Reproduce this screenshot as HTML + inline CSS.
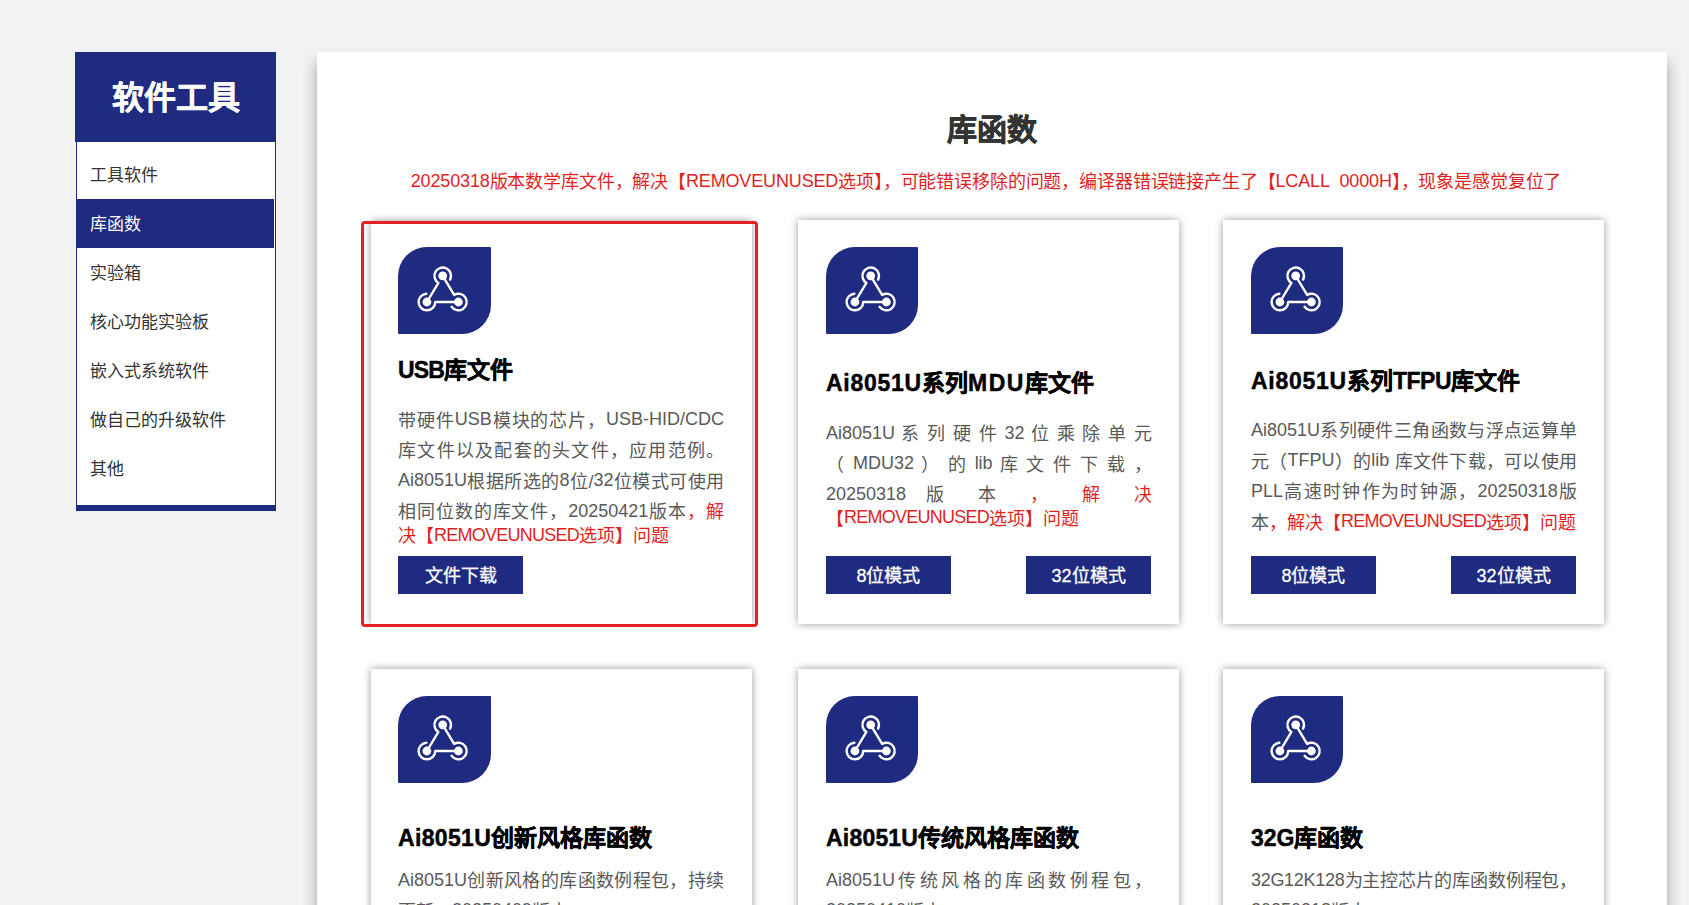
<!DOCTYPE html>
<html lang="zh-CN">
<head>
<meta charset="utf-8">
<style>
html,body{margin:0;padding:0;}
body{width:1689px;height:905px;overflow:hidden;background:#f2f2f2;position:relative;font-family:"Liberation Sans",sans-serif;}
.abs{position:absolute;}
.side-head{left:75px;top:52px;width:201px;height:90px;background:#1f2b80;color:#fff;font-size:32px;font-weight:bold;text-align:center;line-height:92px;-webkit-text-stroke:0.4px #fff;}
.menu{left:76px;top:142px;width:198px;height:363px;background:#fff;border-left:1px solid #1f2b80;border-right:1px solid #1f2b80;border-bottom:6px solid #1f2b80;}
.mi{position:absolute;left:0;width:197px;height:49px;line-height:51px;padding-left:13px;box-sizing:border-box;font-size:17px;color:#333;white-space:nowrap;}
.mi.on{background:#1f2b80;color:#fff;}
.panel{left:317px;top:52px;width:1350px;height:900px;background:#fff;box-shadow:0 10px 13px rgba(0,0,0,0.34);}
.ptitle{left:317px;width:1350px;top:109.5px;height:40px;line-height:40px;text-align:center;font-size:30px;font-weight:bold;color:#333;-webkit-text-stroke:0.6px #333;}
.sub{left:319px;width:1334px;top:169px;letter-spacing:-0.15px;height:26px;line-height:26px;text-align:center;font-size:18px;color:#e01f1f;white-space:nowrap;}
.card{position:absolute;width:381px;height:404px;background:#fff;box-shadow:0 0 8px rgba(0,0,0,0.4);}
.icon{position:absolute;left:27px;top:27px;width:93px;height:87px;background:#1f2b80;border-radius:29px 1px 29px 1px;}
.icon svg{position:absolute;left:0;top:0;}
.ctitle{position:absolute;left:27px;font-size:23px;font-weight:bold;color:#000;white-space:nowrap;line-height:30px;-webkit-text-stroke:0.45px #000;}
.desc{position:absolute;left:27px;width:326px;font-size:18px;color:#595959;}
.desc .l{display:block;height:30.5px;line-height:30.5px;white-space:nowrap;}
.desc .r{color:#e01f1f;}
.ru{letter-spacing:-0.75px;}
.lt{font-style:normal;position:relative;top:-1.5px;}
.desc .j{text-align:justify;text-align-last:justify;}
.btn{position:absolute;top:336px;width:125px;height:38px;line-height:41px;background:#1f2b80;color:#fff;font-size:18px;text-align:center;-webkit-text-stroke:0.3px #fff;}
.hl{left:360.5px;top:220.5px;width:391px;height:400px;border:3px solid #e02222;border-radius:4px;}
</style>
</head>
<body>
<svg width="0" height="0" style="position:absolute"><defs><symbol id="ic" viewBox="0 0 93 87"><g fill="none" stroke="#fff" stroke-width="2.4" stroke-linecap="round"><path d="M40.41 35.91 A8.3 8.3 0 1 1 52.09 32.58 M40.41 35.91 L28.90 55.00 M37.20 55.00 A8.3 8.3 0 1 1 28.32 46.72 M37.20 55.00 L60.40 55.00 M56.13 47.88 A8.3 8.3 0 1 1 53.60 59.75 M56.13 47.88 L44.70 28.80"/></g><g fill="#fff"><circle cx="44.7" cy="28.8" r="4.4"/><circle cx="28.9" cy="55.0" r="4.4"/><circle cx="60.4" cy="55.0" r="4.4"/></g></symbol></defs></svg>
<div class="abs side-head">软件工具</div>
<div class="abs menu">
  <div class="mi" style="top:8px">工具软件</div>
  <div class="mi on" style="top:57px">库函数</div>
  <div class="mi" style="top:106px">实验箱</div>
  <div class="mi" style="top:155px">核心功能实验板</div>
  <div class="mi" style="top:204px">嵌入式系统软件</div>
  <div class="mi" style="top:253px">做自己的升级软件</div>
  <div class="mi" style="top:302px">其他</div>
</div>
<div class="abs panel"></div>
<div class="abs ptitle">库函数</div>
<div class="abs sub"><i class="lt">20250318</i>版本数学库文件，解决【<i class="lt">REMOVEUNUSED</i>选项】，可能错误移除的问题，编译器错误链接产生了【<i class="lt">LCALL</i>&nbsp;&nbsp;<i class="lt">0000H</i>】，现象是感觉复位了</div>

<!-- row 1 -->
<div class="abs" style="left:371px;top:221px;width:381px;height:403px;background:#fff;box-shadow:0 0 8px rgba(0,0,0,0.4)"></div>
<div class="abs" style="left:355px;top:626px;width:410px;height:10px;background:#fff"></div>
<div class="card" style="left:371px;top:220px;box-shadow:none;background:transparent">
  <div class="icon"><svg width="93" height="87"><use href="#ic"/></svg></div>
  <div class="ctitle" id="t1" style="top:135px"><span style="letter-spacing:-0.87px">USB</span>库文件</div>
  <div class="desc" style="top:185.5px">
    <span class="l j">带硬件<i class="lt">USB</i>模块的芯片，<i class="lt">USB-HID/CDC</i></span>
    <span class="l j">库文件以及配套的头文件，应用范例。</span>
    <span class="l j"><i class="lt">Ai8051U</i>根据所选的<i class="lt">8</i>位/<i class="lt">32</i>位模式可使用</span>
    <span class="l j">相同位数的库文件，<i class="lt">20250421</i>版本<span class="r">，解</span></span>
    <span class="l r" style="height:24px;line-height:24px;position:relative;top:-3.5px">决【<span class="ru"><i class="lt">REMOVEUNUSED</i></span>选项】问题</span>
  </div>
  <div class="btn" style="left:27px">文件下载</div>
</div>
<div class="card" style="left:798px;top:220px">
  <div class="icon" style="left:28px;width:92px"><svg width="93" height="87"><use href="#ic"/></svg></div>
  <div class="ctitle" id="t2" style="left:28px;top:148px"><span style="letter-spacing:0.74px">Ai8051U</span>系列<span style="letter-spacing:1.5px">MDU</span>库文件</div>
  <div class="desc" style="left:28px;top:199px">
    <span class="l j"><i class="lt">Ai8051U</i> 系 列 硬 件 <i class="lt">32</i> 位 乘 除 单 元</span>
    <span class="l j">（ <i class="lt">MDU32</i> ） 的 <i class="lt">lib</i> 库 文 件 下 载 ，</span>
    <span class="l j"><i class="lt">20250318</i> 版 本 <span class="r">， 解 决</span></span>
    <span class="l r" style="height:24px;line-height:24px;position:relative;top:-4px">【<span class="ru"><i class="lt">REMOVEUNUSED</i></span>选项】问题</span>
  </div>
  <div class="btn" style="left:28px">8位模式</div>
  <div class="btn" style="left:228px">32位模式</div>
</div>
<div class="card" style="left:1223px;top:220px">
  <div class="icon" style="left:28px;width:92px"><svg width="93" height="87"><use href="#ic"/></svg></div>
  <div class="ctitle" id="t3" style="left:28px;top:146px"><span style="letter-spacing:0.74px">Ai8051U</span>系列<span style="letter-spacing:-0.5px">TFPU</span>库文件</div>
  <div class="desc" style="left:28px;top:196px">
    <span class="l j"><i class="lt">Ai8051U</i>系列硬件三角函数与浮点运算单</span>
    <span class="l j">元（<i class="lt">TFPU</i>）的<i class="lt">lib</i> 库文件下载，可以使用</span>
    <span class="l j"><i class="lt">PLL</i>高速时钟作为时钟源，<i class="lt">20250318</i>版</span>
    <span class="l">本<span class="r">，解决【<span class="ru"><i class="lt">REMOVEUNUSED</i></span>选项】问题</span></span>
  </div>
  <div class="btn" style="left:28px">8位模式</div>
  <div class="btn" style="left:228px">32位模式</div>
</div>

<!-- row 2 -->
<div class="card" style="left:371px;top:669px">
  <div class="icon"><svg width="93" height="87"><use href="#ic"/></svg></div>
  <div class="ctitle" id="t4" style="top:154px"><span style="letter-spacing:0.33px">Ai8051U</span>创新风格库函数</div>
  <div class="desc" style="top:197px">
    <span class="l j"><i class="lt">Ai8051U</i>创新风格的库函数例程包，持续</span>
    <span class="l">更新，<i class="lt">20250409</i>版本</span>
  </div>
</div>
<div class="card" style="left:798px;top:669px">
  <div class="icon" style="left:28px;width:92px"><svg width="93" height="87"><use href="#ic"/></svg></div>
  <div class="ctitle" id="t5" style="left:28px;top:154px"><span style="letter-spacing:0.2px">Ai8051U</span>传统风格库函数</div>
  <div class="desc" style="left:28px;top:197px">
    <span class="l j" style="word-spacing:-2px"><i class="lt">Ai8051U</i> 传 统 风 格 的 库 函 数 例 程 包 ，</span>
    <span class="l"><i class="lt">20250410</i>版本</span>
  </div>
</div>
<div class="card" style="left:1223px;top:669px">
  <div class="icon" style="left:28px;width:92px"><svg width="93" height="87"><use href="#ic"/></svg></div>
  <div class="ctitle" id="t6" style="left:28px;top:154px">32G库函数</div>
  <div class="desc" style="left:28px;top:197px">
    <span class="l j" style="letter-spacing:-0.3px"><i class="lt">32G12K128</i>为主控芯片的库函数例程包，</span>
    <span class="l"><i class="lt">20250318</i>版本</span>
  </div>
</div>

<div class="abs hl"></div>
</body>
</html>
